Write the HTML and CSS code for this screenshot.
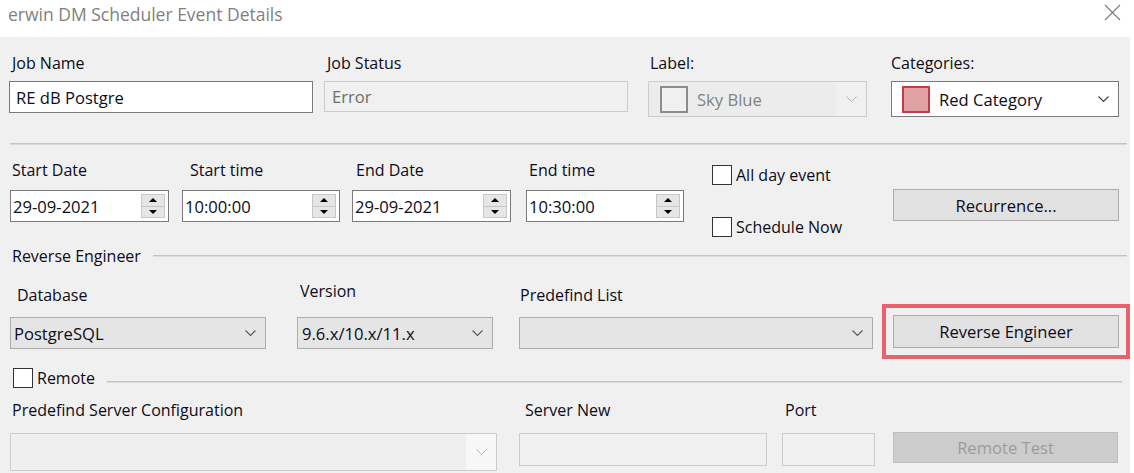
FILE: index.html
```html
<!DOCTYPE html>
<html>
<head>
<meta charset="utf-8">
<link rel="stylesheet" href="styles.css">
</head>
<body>
<div class="window">
  <div class="titlebar">
    <span class="title">erwin DM Scheduler Event Details</span>
    <svg class="close" width="17" height="17" viewBox="0 0 17 17"><path d="M1 1 L16 16 M16 1 L1 16" stroke="#7a7a7a" stroke-width="1.1" fill="none"/></svg>
  </div>
  <div class="content">
    <div class="row row-job">
      <div class="field w-jobname">
        <div class="lbl pl3">Job Name</div>
        <div class="textbox tb-job">RE dB Postgre</div>
      </div>
      <div class="field w-status">
        <div class="lbl pl3">Job Status</div>
        <div class="textbox disabled tb-status">Error</div>
      </div>
      <div class="field w-label">
        <div class="lbl pl2">Label:</div>
        <div class="combo combo-disabled tall">
          <span class="swatch swatch-gray"></span>
          <span class="ctext ctext-disabled">Sky Blue</span>
          <span class="dis-fill"></span>
          <svg class="chev" width="11" height="7" viewBox="0 0 11 7"><path d="M0.5 0.5 L5.5 5.5 L10.5 0.5" stroke="#b5b5b5" stroke-width="1" fill="none"/></svg>
        </div>
      </div>
      <div class="field w-cat">
        <div class="lbl">Categories:</div>
        <div class="combo combo-white tall">
          <span class="swatch swatch-red"></span>
          <span class="ctext">Red Category</span>
          <svg class="chev" width="11" height="7" viewBox="0 0 11 7"><path d="M0.5 0.5 L5.5 5.5 L10.5 0.5" stroke="#404040" stroke-width="1.2" fill="none"/></svg>
        </div>
      </div>
    </div>

    <div class="sep"></div>

    <div class="row row-dates">
      <div class="field w-sdate">
        <div class="lbl lbl-date pl2">Start Date</div>
        <div class="textbox spin">29-09-2021<span class="spinner"><span class="sbtn"><i class="tri up"></i></span><span class="sbtn"><i class="tri down"></i></span></span></div>
      </div>
      <div class="field w-stime">
        <div class="lbl lbl-date pl8">Start time</div>
        <div class="textbox spin">10:00:00<span class="spinner"><span class="sbtn"><i class="tri up"></i></span><span class="sbtn"><i class="tri down"></i></span></span></div>
      </div>
      <div class="field w-edate">
        <div class="lbl lbl-date pl4">End Date</div>
        <div class="textbox spin">29-09-2021<span class="spinner"><span class="sbtn"><i class="tri up"></i></span><span class="sbtn"><i class="tri down"></i></span></span></div>
      </div>
      <div class="field w-etime">
        <div class="lbl lbl-date pl3">End time</div>
        <div class="textbox spin">10:30:00<span class="spinner"><span class="sbtn"><i class="tri up"></i></span><span class="sbtn"><i class="tri down"></i></span></span></div>
      </div>
      <div class="checks">
        <div class="check check-allday"><span class="cb"></span><span>All day event</span></div>
        <div class="check check-now"><span class="cb"></span><span>Schedule Now</span></div>
      </div>
      <div class="btn btn-recur">Recurrence...</div>
    </div>

    <div class="group-head re-head">
      <span>Reverse Engineer</span>
      <span class="gline"></span>
    </div>

    <div class="row row-re">
      <div class="field w-db">
        <div class="lbl lbl-re pl7">Database</div>
        <div class="combo combo-ro">
          <span class="ctext">PostgreSQL</span>
          <svg class="chev" width="11" height="7" viewBox="0 0 11 7"><path d="M0.5 0.5 L5.5 5.5 L10.5 0.5" stroke="#555" stroke-width="1.1" fill="none"/></svg>
        </div>
      </div>
      <div class="field w-ver">
        <div class="lbl lbl-re lbl-ver pl3">Version</div>
        <div class="combo combo-ro">
          <span class="ctext">9.6.x/10.x/11.x</span>
          <svg class="chev" width="11" height="7" viewBox="0 0 11 7"><path d="M0.5 0.5 L5.5 5.5 L10.5 0.5" stroke="#555" stroke-width="1.1" fill="none"/></svg>
        </div>
      </div>
      <div class="field w-plist">
        <div class="lbl lbl-re pl1">Predefind List</div>
        <div class="combo combo-ro">
          <span class="ctext"></span>
          <svg class="chev" width="11" height="7" viewBox="0 0 11 7"><path d="M0.5 0.5 L5.5 5.5 L10.5 0.5" stroke="#555" stroke-width="1.1" fill="none"/></svg>
        </div>
      </div>
      <div class="btn btn-re">Reverse Engineer</div>
    </div>

    <div class="group-head remote-head">
      <span class="cb"></span>
      <span class="remote-text">Remote</span>
      <span class="gline gline-remote"></span>
    </div>

    <div class="row row-server">
      <div class="field w-psc">
        <div class="lbl lbl-srv pl2">Predefind Server Configuration</div>
        <div class="combo combo-disabled tall2">
          <span class="ctext"></span>
          <span class="dis-fill"></span>
          <svg class="chev" width="11" height="7" viewBox="0 0 11 7"><path d="M0.5 0.5 L5.5 5.5 L10.5 0.5" stroke="#b5b5b5" stroke-width="1" fill="none"/></svg>
        </div>
      </div>
      <div class="field w-snew">
        <div class="lbl lbl-srv pl6">Server New</div>
        <div class="textbox disabled tb-srv"></div>
      </div>
      <div class="field w-port">
        <div class="lbl lbl-srv pl3">Port</div>
        <div class="textbox disabled tb-srv"></div>
      </div>
      <div class="btn btn-disabled btn-rtest">Remote Test</div>
    </div>
  </div>
</div>
</body>
</html>
```

FILE: styles.css
```css
* { box-sizing: border-box; }
html, body {
  margin: 0;
  padding: 0;
  background: #ffffff;
  width: 1134px;
  height: 473px;
  overflow: hidden;
  font-family: "Open Sans", "Noto Sans", "Liberation Sans", sans-serif;
  font-size: 16px;
  color: #0c0c1a;
}
.window { width: 1134px; height: 473px; background: #ffffff; }

.titlebar {
  height: 37px;
  display: flex;
  align-items: center;
  justify-content: space-between;
  padding: 0 13px 0 8px;
  background: #ffffff;
}
.title {
  font-size: 17.5px;
  color: #808080;
  margin-top: -10px;
}
.close { margin-top: -12px; }

.content {
  width: 1130px;
  height: 436px;
  background: #f0f0f0;
  padding-top: 16px;
  overflow: hidden;
}

.row { display: flex; align-items: flex-start; }
.field { display: flex; flex-direction: column; flex: none; }
.lbl { line-height: 20px; height: 20px; margin-bottom: 8px; white-space: nowrap; font-size: 16px; }
.pl1 { padding-left: 1px; }
.pl2 { padding-left: 2px; }
.pl3 { padding-left: 3px; }
.pl4 { padding-left: 4px; }
.pl6 { padding-left: 6px; }
.pl7 { padding-left: 7px; }
.pl8 { padding-left: 8px; }

/* row 1 */
.w-jobname { margin-left: 9px; width: 304px; }
.w-status { margin-left: 11px; width: 304px; }
.w-label { margin-left: 20px; width: 219px; }
.w-cat { margin-left: 24px; width: 228px; }

.textbox, .combo, .btn, .check { font-size: 16.6px; }

.textbox {
  height: 32px;
  border: 1px solid #7a7a7a;
  background: #ffffff;
  display: flex;
  align-items: center;
  padding-left: 2px;
  position: relative;
  white-space: nowrap;
}
.tb-job { padding-left: 6px; }
.textbox.disabled {
  border-color: #cccccc;
  background: #f0f0f0;
  color: #6d6d6d;
}
.tb-status { padding-left: 7px; height: 31px; }

.combo {
  height: 32px;
  display: flex;
  align-items: center;
  position: relative;
  white-space: nowrap;
}
.combo.tall { height: 36px; }
.combo.tall2 { height: 38px; }
.combo-white { border: 1px solid #7a7a7a; background: #ffffff; padding-left: 10px; }
.combo-disabled { border: 1px solid #cccccc; background: #f0f0f0; padding-left: 11px; }
.combo-ro { border: 1px solid #adadad; background: #e5e5e5; padding-left: 3px; }
.combo-disabled .dis-fill {
  position: absolute;
  right: 0;
  top: 0;
  bottom: 0;
  width: 30px;
  background: #f0f0f0;
}
.w-label .combo-disabled { background: #ececec; }
.w-label .combo-disabled .dis-fill { background: #f0f0f0; }
.w-psc .combo-disabled { background: #efefef; }
.w-psc .combo-disabled .dis-fill { background: #f7f7f7; }
.ctext { flex: 1; }
.ctext-disabled { color: #838383; }
.chev { position: absolute; right: 9px; top: 50%; margin-top: -3px; }

.swatch {
  width: 28px;
  height: 27px;
  flex: none;
  margin-right: 9px;
}
.swatch-gray { border: 2px solid #8c8c8c; background: #f0f0f0; margin-right: 9px; }
.swatch-red { border: 2px solid #c43a4b; background: #e0a1a3; }

.sep {
  height: 2px;
  margin: 26px 3px 0 10px;
  background: #c4c4c4;
  border-bottom: 1px solid #d8d8d8;
}

/* row 2 */
.row-dates { margin-top: 15px; height: 77px; }
.lbl-date { margin-bottom: 10px; }
.w-sdate { margin-left: 10px; width: 159px; }
.w-stime { margin-left: 13px; width: 158px; }
.w-edate { margin-left: 12px; width: 159px; }
.w-etime { margin-left: 15px; width: 158px; }
.textbox.spin { padding-left: 2px; }
.spinner {
  position: absolute;
  right: 3px;
  top: 3px;
  width: 24px;
  height: 24px;
  display: flex;
  flex-direction: column;
}
.sbtn {
  flex: 1;
  background: #e6e6e6;
  border: 1px solid #c8c8c8;
  display: flex;
  align-items: center;
  justify-content: center;
}
.sbtn + .sbtn { border-top: none; }
.tri { width: 0; height: 0; display: block; }
.tri.up { border-left: 4px solid transparent; border-right: 4px solid transparent; border-bottom: 4px solid #000; }
.tri.down { border-left: 4px solid transparent; border-right: 4px solid transparent; border-top: 4px solid #000; }

.checks { margin-left: 28px; width: 160px; flex: none; display: flex; flex-direction: column; }
.check { display: flex; align-items: center; height: 20px; white-space: nowrap; font-size: 16px; }
.check-allday { margin-top: 5px; }
.check-now { margin-top: 32px; }
.cb {
  width: 20px;
  height: 20px;
  border: 1px solid #333333;
  background: #ffffff;
  flex: none;
  margin-right: 4px;
}

.btn {
  flex: none;
  display: flex;
  align-items: center;
  justify-content: center;
  background: #e1e1e1;
  border: 1px solid #adadad;
  white-space: nowrap;
}
.btn-recur { margin-left: 21px; margin-top: 29px; width: 226px; height: 32px; }

/* group heads */
.group-head { display: flex; align-items: center; height: 20px; font-size: 16px; }
.re-head { margin-top: 9px; padding-left: 12px; }
.gline {
  flex: 1;
  height: 2px;
  background: #c4c4c4;
  border-bottom: 1px solid #dcdcdc;
  margin-left: 12px;
  margin-right: 3px;
}

/* row 3 */
.row-re { margin-top: 19px; }
.lbl-re { margin-bottom: 12px; }
.lbl-ver { margin-top: -4px; margin-bottom: 16px; }
.w-db { margin-left: 10px; width: 256px; }
.w-ver { margin-left: 31px; width: 196px; }
.w-ver .combo-ro { padding-left: 4px; }
.w-plist { margin-left: 26px; width: 354px; }
.btn-re {
  margin-left: 20px;
  margin-top: 30px;
  width: 226px;
  height: 33px;
  outline: 4px solid #e8626d;
  outline-offset: 7px;
}

/* remote */
.remote-head { margin-top: 19px; padding-left: 13px; }
.remote-head .cb { margin-right: 4px; }
.gline-remote { margin-left: 12px; margin-right: 8px; margin-top: 8px; }

/* row 5 */
.row-server { margin-top: 12px; }
.lbl-srv { margin-bottom: 13px; }
.w-psc { margin-left: 10px; width: 487px; }
.w-snew { margin-left: 22px; width: 248px; }
.w-port { margin-left: 15px; width: 93px; }
.tb-srv { height: 33px; background: #f0f0f0; }
.btn-disabled { background: #cccccc; border-color: #bfbfbf; color: #9c9c9c; }
.btn-rtest { margin-left: 18px; margin-top: 32px; width: 225px; height: 31px; }
```
